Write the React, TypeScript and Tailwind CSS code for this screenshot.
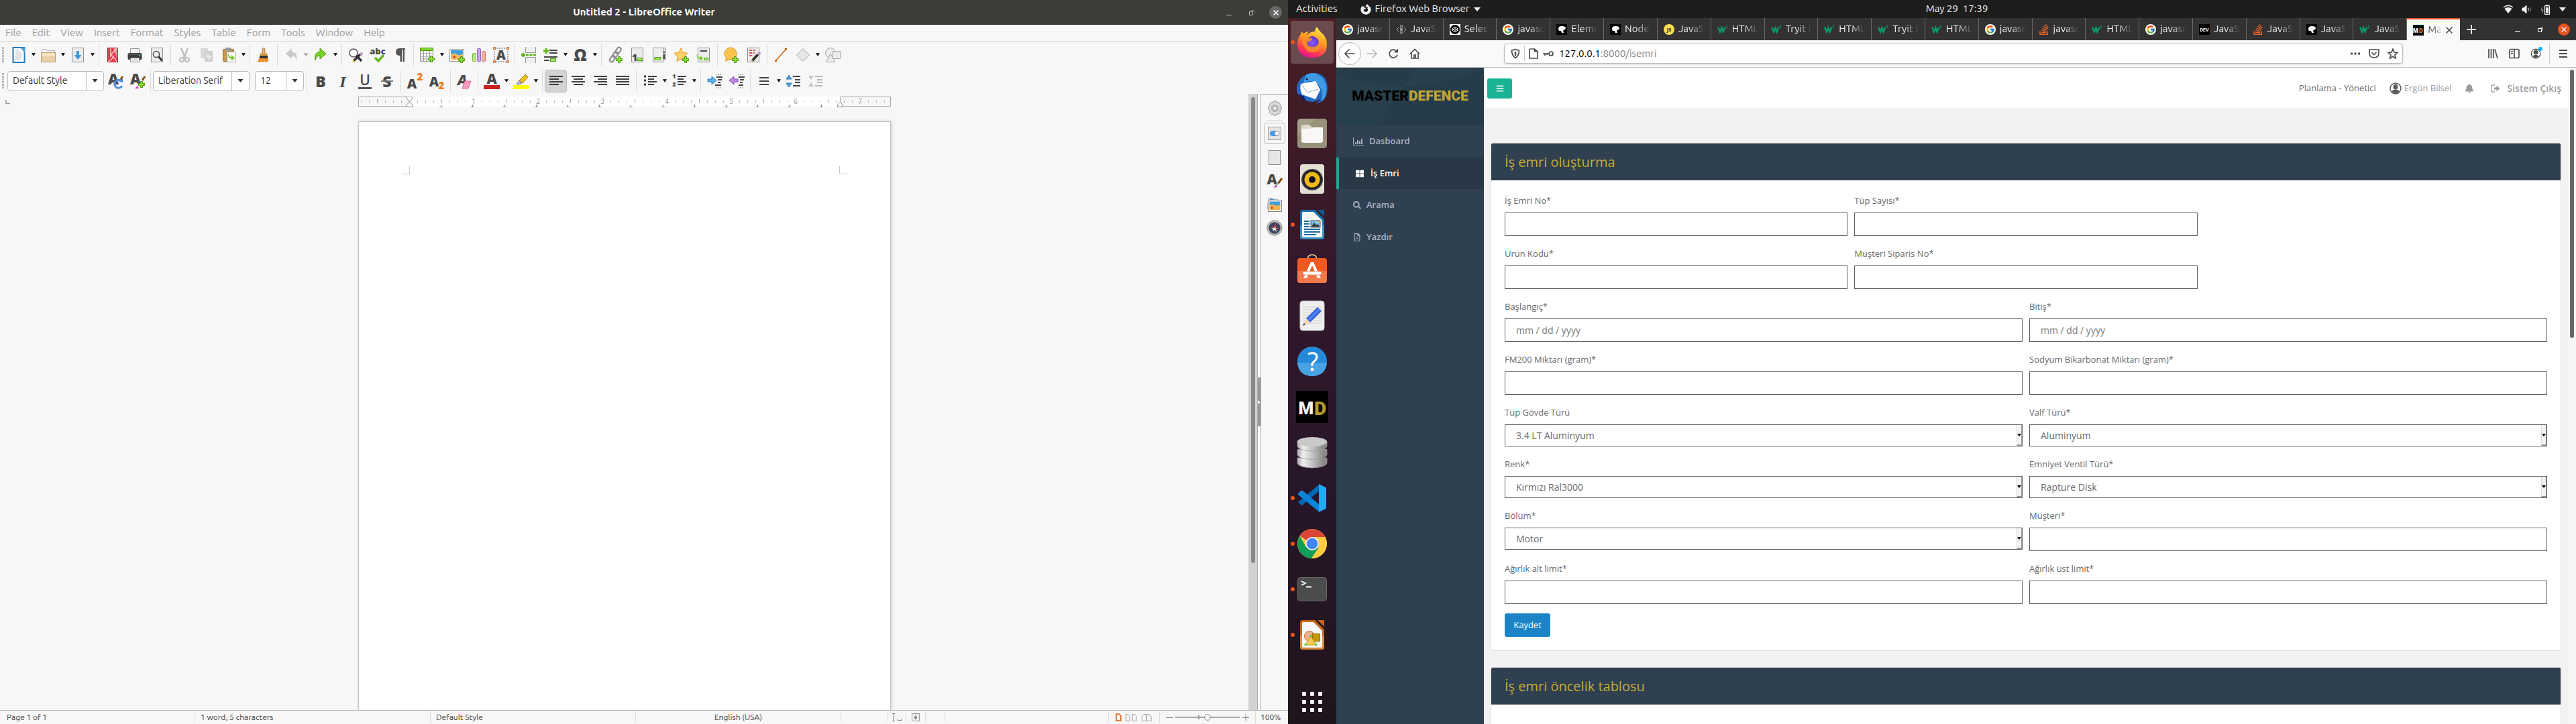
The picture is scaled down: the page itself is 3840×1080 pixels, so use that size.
import React, { useState } from "react";
import { FcGoogle } from "react-icons/fc";
import { SiCodepen, SiStackoverflow } from "react-icons/si";
import { FaFirefoxBrowser, FaThLarge, FaSearch, FaRegFilePdf, FaBell, FaBars } from "react-icons/fa";

const ui = "font-['Ubuntu','Noto_Sans',sans-serif]";

/* ---------- small shared pieces ---------- */

function Plus({ x, y }: { x: number; y: number }) {
  return (
    <path
      transform={`translate(${x} ${y})`}
      d="M3.5 .5h3v3h3v3h-3v3h-3v-3h-3v-3h3z"
      fill="#8ae234"
      stroke="#4e9a06"
    />
  );
}

function Lines({ x, widths, color = "#3f3f3f" }: { x: number[]; widths: number[]; color?: string }) {
  return (
    <g fill={color}>
      {widths.map((w, i) => (
        <rect key={i} x={x[i]} y={4 + i * 4} width={w} height="2" />
      ))}
    </g>
  );
}

function Glyph({ ch, x = 12, y = 20, size = 21, fill = "#484848", font = "Open Sans", italic = false, weight = 800 }: {
  ch: string; x?: number; y?: number; size?: number; fill?: string; font?: string; italic?: boolean; weight?: number;
}) {
  return (
    <text x={x} y={y} fontSize={size} fill={fill} fontFamily={`'${font}', sans-serif`} fontWeight={weight} fontStyle={italic ? "italic" : "normal"} textAnchor="middle">
      {ch}
    </text>
  );
}

const Sheet = () => <rect x="3.5" y="1.5" width="17" height="21" fill="#ececec" stroke="#8e8e8e" />;

const Brush = () => (
  <g>
    <path d="M23 8l-6 8" stroke="#8f4a06" strokeWidth="3" />
    <path d="M17 15l-3 4" stroke="#aaa" strokeWidth="2.5" />
    <path d="M14 18l-4 4 6-1z" fill="#c03cc0" />
  </g>
);

const icons: Record<string, React.ReactNode> = {
  new: (
    <g>
      <path d="M3.5 1h17v22h-17z" fill="#fff" stroke="#2a7ab8" strokeWidth="2" />
      <path d="M14 1h7v8z" fill="#4ba3dc" />
      <path d="M7 6h6M7 9h9M7 12h10M7 15h10M7 18h8" stroke="#b5b5b5" />
    </g>
  ),
  open: (
    <g>
      <path d="M2.5 9V3.5h7l1 2h11V9" fill="#fff" stroke="#b0b0b0" />
      <path d="M1.500 8.500h21v14h-21z" fill="#e9cfa5" stroke="#b89b6b" />
      <path d="M2 9.500h20v4H2z" fill="#f6e4c6" />
    </g>
  ),
  save: (
    <g>
      <Sheet />
      <path d="M12 6v8" stroke="#3a9ad9" strokeWidth="4" />
      <path d="M6.500 12h11L12 19z" fill="#3a9ad9" />
    </g>
  ),
  pdf: (
    <g>
      <rect x="4.500" y="1.500" width="15" height="21" fill="#d8434e" stroke="#a8202c" />
      <path d="M13 2h6v17z" fill="#ee8e94" />
      <path d="M9 2v13M18 2L9 12q6 3 9 10M5 22q6-2 8-8" stroke="#fbdcdc" strokeWidth="1.200" fill="none" />
    </g>
  ),
  print: (
    <g>
      <path d="M5.500 2.500h13V10h-13z" fill="#f2f2f2" stroke="#999" />
      <rect x="1.500" y="9" width="21" height="10" rx="2" fill="#3c3c3c" />
      <path d="M2 11h20" stroke="#777" />
      <rect x="18" y="12" width="2" height="2" fill="#3bc0e8" />
      <path d="M5.500 16.500h13v6h-13z" fill="#f4f4f4" stroke="#888" />
      <path d="M8 19.500h8" stroke="#999" />
    </g>
  ),
  preview: (
    <g>
      <Sheet />
      <circle cx="11" cy="11" r="4.500" fill="#f8f8f8" stroke="#444" strokeWidth="1.500" />
      <path d="M14.500 14.500l5 6" stroke="#333" strokeWidth="3" />
    </g>
  ),
  cut: (
    <g stroke="#bdbdbd" fill="none">
      <path d="M7 2l6 14M17 2l-6 14" strokeWidth="2.500" />
      <circle cx="8" cy="19" r="3" strokeWidth="2" />
      <circle cx="16" cy="19" r="3" strokeWidth="2" />
    </g>
  ),
  copy: (
    <g fill="#d9d9d9">
      <path d="M3 2h11v15H3z" />
      <path d="M9 6h12v16H9z" fill="#cfcfcf" />
      <path d="M12 10v4h4M14 12l4 3-4 3" fill="none" stroke="#eee" strokeWidth="2" />
    </g>
  ),
  paste: (
    <g>
      <rect x="3.500" y="3.500" width="16" height="18" rx="1" fill="#c89a52" stroke="#8c6424" />
      <rect x="7" y="1" width="9" height="5" rx="1" fill="#9a9a9a" />
      <path d="M9.500 7.500h12v15h-12z" fill="#fafafa" stroke="#999" />
      <path d="M12 10q0 5 4 5v-3l5 4.500-5 4v-3q-5 0-5-7z" fill="#73c924" />
    </g>
  ),
  brush: (
    <g>
      <path d="M12 1.500q2 0 2 3l-.5 5h-3l-.5-5q0-3 2-3z" fill="#e7b878" stroke="#b07830" />
      <path d="M7 9h10l1 4H6z" fill="#e0a050" />
      <path d="M6 13h12v5H6z" fill="#333" />
      <path d="M5 17h14v5q-9 1-18 0 4-1 4-5z" fill="#e88a28" />
      <path d="M9 18v4M13 18v4" stroke="#f7b765" />
    </g>
  ),
  undo: <path d="M4 10l9-8v5q9 1 7 13-1-7-7-7v5z" fill="#c9c9c9" />,
  redo: <path d="M20 10l-9-8v5q-9 1-7 13 1-7 7-7v5z" fill="#7bd12e" stroke="#4e9a06" />,
  find: (
    <g>
      <circle cx="9" cy="9" r="6" fill="#fff" stroke="#555" strokeWidth="1.500" />
      <path d="M13 13l8 8" stroke="#333" strokeWidth="3.500" />
      <path d="M9 21L19 11" stroke="#333" strokeWidth="3.500" />
      <path d="M19 12l3-3" stroke="#c48bc8" strokeWidth="4" />
      <path d="M7 23l1-4 3 3z" fill="#e8d060" />
    </g>
  ),
  abc: (
    <g>
      <Glyph ch="abc" size={13} y={11} />
      <path d="M8 16l5 5 8-9" fill="none" stroke="#62b81c" strokeWidth="3.500" />
    </g>
  ),
  pilcrow: (
    <g fill="#555">
      <path d="M12 2h8v2h-1v18h-2.500V4H15v18h-2.500v-9Q6 13 6 7.500T12 2z" />
    </g>
  ),
  table: (
    <g>
      <rect x="1.500" y="1.500" width="19" height="20" fill="#fff" stroke="#999" />
      <path d="M1.500 1.500h19v4h-19z" fill="#84d43a" stroke="#4e9a06" />
      <path d="M2 10h18M2 14h18M2 18h18M6.500 6v15M11 6v15M15.500 6v15" stroke="#999" />
      <Plus x={13} y={13} />
    </g>
  ),
  image: (
    <g>
      <rect x="1.500" y="3.500" width="21" height="18" fill="#fff" stroke="#999" />
      <path d="M3 5h18v8H3z" fill="#3c9de0" />
      <path d="M3 11q5-3 9 0t9-1v9H3z" fill="#f0b860" />
      <path d="M8 13l1 4M6 15h4" stroke="#d84020" strokeWidth="1.500" />
      <Plus x={14} y={14} />
    </g>
  ),
  chart: (
    <g>
      <rect x="2.500" y="9.500" width="5" height="12" rx="1" fill="#b6ea85" stroke="#73b83a" />
      <rect x="9.500" y="2.500" width="5" height="19" rx="1" fill="#cfa6ee" stroke="#9360c4" />
      <rect x="16.500" y="6.500" width="5" height="15" rx="1" fill="#f3b2a0" stroke="#d27660" />
    </g>
  ),
  textbox: (
    <g>
      <rect x="2" y="2" width="20" height="20" fill="none" stroke="#555" strokeDasharray="2 1.500" />
      <Glyph ch="A" size={19} y={19} />
      <path d="M.5.5h3v3h-3zM20.500.5h3v3h-3zM.5 20.500h3v3h-3zM20.500 20.500h3v3h-3z" fill="#f5b48e" stroke="#d2703a" />
    </g>
  ),
  pagebreak: (
    <g>
      <path d="M7.500 0v8.500h15V0M7.500 24v-8.500h15V24" fill="#f0f0f0" stroke="#999" />
      <path d="M8 12h16" stroke="#62b81c" strokeWidth="3" strokeDasharray="4 1.500" />
      <path d="M1 12h6M4 9v6" stroke="#62b81c" strokeWidth="3" />
    </g>
  ),
  fields: (
    <g>
      <path d="M10 5h12M10 9h12M2 15h20M2 20h8" stroke="#444" strokeWidth="2" />
      <path d="M5 2v8M1 6h8" stroke="#62b81c" strokeWidth="3" />
      <rect x="11.500" y="17.500" width="8" height="4" fill="#a6e86a" stroke="#4e9a06" />
    </g>
  ),
  omega: <Glyph ch="Ω" size={24} y={21} />,
  link: (
    <g fill="none">
      <g transform="rotate(35 12 12)" stroke="#8a8a8a" strokeWidth="2">
        <rect x="9" y="-1" width="6" height="10" rx="3" />
        <rect x="9" y="7" width="6" height="9" rx="3" />
        <rect x="9" y="14" width="6" height="10" rx="3" />
      </g>
      <Plus x={13} y={14} />
    </g>
  ),
  footnote: (
    <g>
      <Sheet />
      <Glyph ch="1" x={8} y={21} size={14} />
      <rect x="12" y="16.500" width="7" height="4" fill="#a6e86a" stroke="#4e9a06" />
    </g>
  ),
  endnote: (
    <g>
      <path d="M6.500 1.500h15v18h-15z" fill="#e4e4e4" stroke="#999" />
      <path d="M2.500 1.500h15v21h-15z" fill="#efefef" stroke="#8e8e8e" />
      <rect x="5" y="15.500" width="9" height="4" fill="#a6e86a" stroke="#4e9a06" />
      <path d="M19 11v7M19 7v2" stroke="#444" strokeWidth="2" />
    </g>
  ),
  star: (
    <g>
      <path d="M11 1.500l3 7 7 .8-5 5 1.300 7.200L11 18l-6 3.500 1-7.200-5-5 7-.8z" fill="#fcd068" stroke="#e09a2c" />
      <Plus x={13} y={14} />
    </g>
  ),
  crossref: (
    <g>
      <Sheet />
      <path d="M7 6h10" stroke="#444" strokeWidth="2" />
      <path d="M2 10q0 6 5 6v-3l4 4-4 4v-3q-7-1-5-8z" fill="#73c924" />
      <rect x="13.500" y="16.500" width="5" height="3" fill="#a6e86a" stroke="#4e9a06" />
    </g>
  ),
  comment: (
    <g>
      <circle cx="11" cy="10" r="9" fill="#fcc24e" stroke="#dc9420" />
      <path d="M4 15l-1 7 7-3z" fill="#f0b040" />
      <Plus x={13} y={14} />
    </g>
  ),
  track: (
    <g>
      <Sheet />
      <path d="M6 5h9M6 9h8M6 13h6" stroke="#d03434" strokeWidth="1.500" strokeDasharray="4 1" />
      <path d="M10 21l9-10" stroke="#333" strokeWidth="4" />
      <path d="M19 12l3-4" stroke="#c48bc8" strokeWidth="4" />
      <path d="M8 23l1-4 3 2z" fill="#e8d060" />
    </g>
  ),
  line: (
    <g>
      <path d="M4 21L19 4" stroke="#d2600a" strokeWidth="1.500" />
      <path d="M3 19h3v3H3zM18 2h3v3h-3z" fill="#d2600a" />
    </g>
  ),
  diamond: <path d="M12 2.500L21.500 12 12 21.500 2.500 12z" fill="#e6e6e6" stroke="#a6a6a6" />,
  shapes: (
    <g fill="#ececec" stroke="#a6a6a6">
      <circle cx="9" cy="9" r="7.500" />
      <rect x="12.500" y="6.500" width="11" height="11" />
      <path d="M9 10.500l7 12H2z" />
    </g>
  ),
  styleUpdate: (
    <g>
      <Glyph ch="A" x={9} y={17} size={22} />
      <path d="M23 5l-4 6" stroke="#8f4a06" strokeWidth="3" />
      <path d="M21 12a6 6 0 1 0 1 7" fill="none" stroke="#4f8fdc" strokeWidth="3" />
      <path d="M17 13l6 1 0-6z" fill="#4f8fdc" />
    </g>
  ),
  styleNew: (
    <g>
      <Glyph ch="A" x={9} y={17} size={22} />
      <path d="M23 5l-4 6" stroke="#8f4a06" strokeWidth="3" />
      <path d="M8 23l4-4 2 4z" fill="#d03cc0" />
      <Plus x={13} y={12} />
    </g>
  ),
  bold: <Glyph ch="B" size={23} y={21} font="Open Sans" />,
  italic: <Glyph ch="I" size={24} y={21} font="Liberation Serif" italic weight={700} />,
  underline: (
    <g>
      <Glyph ch="U" size={21} y={18} font="Open Sans" weight={600} />
      <rect x="2" y="21" width="20" height="3" fill="#555" />
    </g>
  ),
  strike: (
    <g>
      <Glyph ch="S" size={23} y={21} />
      <rect x="3" y="11" width="18" height="2" fill="#777" />
    </g>
  ),
  sup: (
    <g>
      <Glyph ch="A" x={8} y={23} size={20} />
      <Glyph ch="2" x={20} y={11} size={15} fill="#ee7a1c" />
    </g>
  ),
  sub: (
    <g>
      <Glyph ch="A" x={8} y={20} size={20} />
      <Glyph ch="2" x={19} y={24} size={15} fill="#ee7a1c" />
    </g>
  ),
  clear: (
    <g>
      <Glyph ch="A" x={9} y={18} size={21} italic />
      <path d="M13 12h9l-4 11h-9z" fill="#f79ac0" stroke="#e0669a" />
    </g>
  ),
  fontcolor: (
    <g>
      <Glyph ch="A" y={16} size={21} />
      <rect x="0" y="18" width="24" height="6" fill="#c9211e" />
    </g>
  ),
  highlight: (
    <g>
      <path d="M18 2l4 4-8 9-5-4z" fill="#f0c020" stroke="#a88414" />
      <path d="M9 11l4 4-6 2-2-1z" fill="#bbb" stroke="#777" />
      <rect x="0" y="18" width="24" height="6" fill="#ffff00" />
    </g>
  ),
  left: <Lines x={[2, 2, 2, 2]} widths={[20, 14, 20, 14]} />,
  center: <Lines x={[2, 5, 2, 5]} widths={[20, 14, 20, 14]} />,
  right: <Lines x={[2, 8, 2, 8]} widths={[20, 14, 20, 14]} />,
  justify: <Lines x={[2, 2, 2, 2]} widths={[20, 20, 20, 20]} />,
  bullets: (
    <g>
      <Lines x={[9, 9, 9, 9]} widths={[13, 9, 13, 9]} />
      <path d="M3 5h3M3 11h3M3 17h3" stroke="#3f3f3f" strokeWidth="3" />
    </g>
  ),
  numbers: (
    <g>
      <Lines x={[9, 9, 9, 9]} widths={[13, 9, 13, 9]} />
      <Glyph ch="1" x={4} y={8} size={9} />
      <Glyph ch="2" x={4} y={20} size={9} />
    </g>
  ),
  indent: (
    <g>
      <path d="M2 9h6V5l7 6-7 6v-4H2z" fill="#5db2e8" stroke="#2c78b4" />
      <path d="M15 6h9M17 10h6M17 14h4M13 18h9" stroke="#444" strokeWidth="2" />
      <path d="M14 2h8M14 22h8" stroke="#888" strokeDasharray="2 1" />
    </g>
  ),
  outdent: (
    <g>
      <path d="M14 9H8V5l-7 6 7 6v-4h6z" fill="#c08ae8" stroke="#8048b4" />
      <path d="M15 6h9M17 10h6M17 14h4M15 18h7" stroke="#444" strokeWidth="2" />
      <path d="M14 2h8M14 22h8" stroke="#888" strokeDasharray="2 1" />
    </g>
  ),
  spacing: <path d="M5 7h14M5 12h14M5 17h14" stroke="#444" strokeWidth="2" />,
  paraUp: (
    <g>
      <path d="M1 9l4-6 4 6zM1 15l4 6 4-6z" fill="#4ea6e0" stroke="#2c78b4" />
      <path d="M11 5h11M14 10h8M14 14h8M11 19h11" stroke="#444" strokeWidth="2" />
    </g>
  ),
  paraDown: (
    <g>
      <path d="M1 4h8l-4 6zM1 20h8l-4-6z" fill="#c4c4c4" />
      <path d="M11 5h11M14 10h8M14 14h8M11 19h11" stroke="#b8b8b8" strokeWidth="2" />
    </g>
  ),
};

function Caret({ pale = false }: { pale?: boolean }) {
  return (
    <svg viewBox="0 0 8 6" className={pale ? "h-[5px] w-[6px] text-gray-400" : "h-[5px] w-[6px] text-black"} aria-hidden="true">
      <path d="M0 0h8L4 6z" fill="currentColor" />
    </svg>
  );
}

/* "|" is a divider, "v" a drop-down arrow, "w" a disabled arrow */
function Tools({ items }: { items: string[] }) {
  return (
    <>
      {items.map((n, i) => {
        if (n === "|") return <span key={i} className="ml-1 mr-[3px] h-8 w-px shrink-0 bg-[#dadada]" />;
        if (n === "v" || n === "w")
          return (
            <button key={i} aria-label={`${items[i - 1]} options`} className="flex h-8 w-[11px] shrink-0 items-center justify-center">
              <Caret pale={n === "w"} />
            </button>
          );
        return (
          <button
            key={i}
            aria-label={n}
            className={
              n === "left"
                ? "flex h-[34px] w-[33px] shrink-0 items-center justify-center rounded border border-[#bdbdbd] bg-[#d3d3d3]"
                : "flex h-[34px] w-[33px] shrink-0 items-center justify-center"
            }
          >
            <svg viewBox="0 0 24 24" className="size-6 overflow-visible">{icons[n]}</svg>
          </button>
        );
      })}
    </>
  );
}

const Grip = () => <span className="ml-[3px] mr-[5px] h-6 w-[3px] shrink-0 bg-[repeating-linear-gradient(#bbb_0_3px,transparent_3px_4px)]" />;

function Combo({ label, value, narrow = false }: { label: string; value: string; narrow?: boolean }) {
  return (
    <div className={narrow ? "flex h-[30px] w-[73px] shrink-0 rounded border border-[#bdbdbd] bg-white" : "flex h-[30px] w-36 shrink-0 rounded border border-[#bdbdbd] bg-white"}>
      <input aria-label={label} defaultValue={value} className="mr-1 min-w-0 flex-1 bg-transparent pl-[7px] text-[14px] text-[#333] outline-none" />
      <button aria-label={`${label} list`} className="flex w-[26px] items-center justify-center border-l border-[#bdbdbd] text-[#333]">
        <svg viewBox="0 0 8 5" className="h-[5px] w-[9px]"><path d="M0 0h8L4 5z" fill="currentColor" /></svg>
      </button>
    </div>
  );
}

/* ---------- Writer ---------- */

function Ruler() {
  const ticks: React.ReactNode[] = [];
  for (let i = -6; i <= 59; i++) {
    const x = 76 + i * 12;
    if (i % 8 === 0) continue;
    const half = i % 4 === 0;
    ticks.push(<path key={i} d={half ? `M${x}.5 4v6` : `M${x}.5 6v3`} stroke="#a8a8a8" />);
  }
  return (
    <svg viewBox="0 0 794 16" className="h-4 w-[794px] shrink-0" aria-hidden="true">
      <rect x="76" y="0" width="643" height="15" fill="#fff" />
      <path d="M76.500.5H.5v14h76M718.500 15V.5h75v14h-75" fill="none" stroke="#a8a8a8" />
      {ticks}
      {[1, 2, 3, 4, 5, 6, 7].map((n) => (
        <text key={n} x={76 + n * 96} y="11" fontSize="10" textAnchor="middle" fill="#9a9a9a" fontFamily="'Noto Sans', sans-serif">{n}</text>
      ))}
      {Array.from({ length: 13 }, (_, i) => Math.round(76 + (i + 1) * 47.2)).map((x) => (
        <path key={x} d={`M${x - 2} 15.500h5M${x + 0.5} 12v4`} stroke="#888" />
      ))}
      <path d="M72.500 0h8v3l-4 5 4 4v3.500h-8V12l4-4-4-5zM714.500 15.500v-3l4-4 4 4v3z" fill="#fff" stroke="#888" />
    </svg>
  );
}

const sideIcons: { name: string; art: React.ReactNode }[] = [
  {
    name: "Page deck",
    art: <rect x="3.500" y="1.500" width="17" height="21" fill="#e6e6e6" stroke="#8e8e8e" />,
  },
  { name: "Styles deck", art: <g><Glyph ch="A" x={8} y={17} size={21} /><Brush /></g> },
  {
    name: "Gallery",
    art: (
      <g>
        <path d="M3 2l18 4-2 16-18-3z" fill="#f4f4f4" stroke="#aaa" />
        <path d="M5 3l12 3v2H4z" fill="#3c8ad0" />
        <rect x="2.500" y="5.500" width="20" height="17" fill="#fff" stroke="#888" />
        <path d="M4.500 7.500h16v7h-16z" fill="#3c9de0" />
        <path d="M4.500 13q4-2 8 0t8-1v8.500h-16z" fill="#f0b450" />
        <path d="M8 15v4M6 17h4" stroke="#d84020" strokeWidth="1.500" />
      </g>
    ),
  },
  {
    name: "Navigator",
    art: (
      <g>
        <circle cx="12" cy="12" r="10" fill="#3b4660" stroke="#c0c0c0" strokeWidth="2.500" />
        <circle cx="12" cy="12" r="11.300" fill="none" stroke="#777" strokeWidth=".7" />
        <path d="M12 9l2 3 3 1-3 1 1 4-3-3-3 2 1-3-3-1 3-1z" fill="#f4f4f4" />
        <path d="M14 4l-1 7-6-1 5 2zM13 12l6 1-6 0z" fill="#e04040" stroke="#e04040" strokeWidth=".6" />
      </g>
    ),
  },
];

function Writer() {
  return (
    <section className={`flex w-1/2 min-w-0 flex-col bg-[#f7f7f7] text-[13px] text-[#3d3d3d] ${ui}`}>
      <header className="grid h-[37px] shrink-0 grid-cols-[1fr_auto_1fr] items-center bg-[#3e3c39] text-white">
        <h1 className="col-start-2 text-[15px] font-bold">Untitled 2 - LibreOffice Writer</h1>
        <div className="flex items-center justify-end gap-[18px] pr-[9px] text-[#bbb]">
          <button aria-label="Minimize"><svg className="size-4" viewBox="0 0 16 16"><path d="M4 11.500h8" stroke="currentColor" /></svg></button>
          <button aria-label="Restore"><svg className="size-4" viewBox="0 0 16 16" fill="none" stroke="currentColor"><rect x="4.500" y="6.500" width="5" height="5" /><path d="M7 4.500h4.500V10" opacity=".5" /></svg></button>
          <button aria-label="Close" className="flex size-[19px] items-center justify-center rounded-full bg-[#686765] text-white">
            <svg className="size-2.5" viewBox="0 0 10 10"><path d="M1.500 1.500l7 7M8.500 1.500l-7 7" stroke="currentColor" strokeWidth="1.500" /></svg>
          </button>
        </div>
      </header>
      <nav className="flex h-[25px] shrink-0 items-center gap-4 border-b border-[#d8d8d8] pl-2 text-[15px] text-[#999]">
        {["File", "Edit", "View", "Insert", "Format", "Styles", "Table", "Form", "Tools", "Window", "Help"].map((m) => (
          <button key={m}>{m}</button>
        ))}
      </nav>
      <div className="flex h-[39px] shrink-0 items-center" role="toolbar" aria-label="Standard">
        <Grip />
        <Tools
          items={["new", "v", "open", "v", "save", "v", "|", "pdf", "print", "preview", "|", "cut", "copy", "paste", "v", "|", "brush", "|", "undo", "w", "redo", "v", "|", "find", "abc", "pilcrow", "|", "table", "v", "image", "chart", "textbox", "|", "pagebreak", "fields", "v", "omega", "v", "|", "link", "footnote", "endnote", "star", "crossref", "|", "comment", "track", "|", "line", "diamond", "v", "shapes"]}
        />
      </div>
      <div className="flex h-[39px] shrink-0 items-center" role="toolbar" aria-label="Formatting">
        <Grip />
        <Combo label="Paragraph style" value="Default Style" />
        <Tools items={["styleUpdate", "styleNew"]} />
        <span className="mx-[3px] h-8 w-px shrink-0 bg-[#dadada]" />
        <Combo label="Font name" value="Liberation Serif" />
        <span className="w-2" />
        <Combo label="Font size" value="12" narrow />
        <Tools
          items={["|", "bold", "italic", "underline", "strike", "|", "sup", "sub", "|", "clear", "|", "fontcolor", "v", "highlight", "v", "|", "left", "center", "right", "justify", "|", "bullets", "v", "numbers", "v", "|", "indent", "outdent", "|", "spacing", "v", "paraUp", "paraDown"]}
        />
      </div>
      <div className="flex min-h-0 flex-1">
        <div className="relative flex min-w-0 flex-1 flex-col items-center overflow-hidden pt-1">
          <svg className="absolute left-2 top-2 size-2" viewBox="0 0 8 8"><path d="M1 1v5.500h6" fill="none" stroke="#999" strokeWidth="1.500" /></svg>
          <Ruler />
          <div role="textbox" aria-label="Document" className="mt-[21px] flex w-[794px] flex-1 justify-between border border-b-0 border-[#c4c4c4] bg-white px-16 pt-[66px] shadow-[1px_0_5px_#0003]">
            <svg className="size-3" viewBox="0 0 12 12"><path d="M11.500 0v11.500H0" fill="none" stroke="#c8c8c8" /></svg>
            <svg className="size-3" viewBox="0 0 12 12"><path d="M.5 0v11.500H12" fill="none" stroke="#c8c8c8" /></svg>
          </div>
        </div>
        <div className="flex w-[13px] flex-col items-center bg-[#d2d2d2] pt-[5px]">
          <span className="h-[76%] w-[6px] rounded-full bg-[#888]" />
        </div>
        <div className="flex w-[6px] flex-col justify-center border-x border-[#a8a8a8] bg-white">
          <button aria-label="Hide sidebar" className="flex h-[73px] items-center justify-center bg-[#999] text-white">
            <svg viewBox="0 0 4 6" className="h-2 w-1"><path d="M0 0l4 3-4 3z" fill="currentColor" /></svg>
          </button>
        </div>
        <aside className="flex w-10 flex-col items-center border-t border-[#aaa] pt-2">
          <button aria-label="Sidebar settings" className="flex size-6 items-center justify-center">
            <svg viewBox="0 0 24 24" className="size-[23px]">
              <path d="M10 1h4l1 2.500 2.500-1 3 3-1 2.500 2.500 1.500v5L19.500 16l1 2.500-3 3-2.500-1L14 23h-4l-1-2.500-2.500 1-3-3 1-2.500L2 14.500v-5L4.500 8l-1-2.500 3-3 2.500 1z" fill="#dcdcdc" stroke="#909090" />
              <circle cx="12" cy="12" r="5.500" fill="#c4c4c4" stroke="#aaa" />
              <circle cx="12" cy="12" r="3" fill="#f7f7f7" stroke="#888" />
            </svg>
          </button>
          <span className="mt-1.5 h-px w-6 bg-[#ddd]" />
          <button aria-label="Properties" className="mt-[3px] flex h-8 w-8 items-center justify-center rounded border border-[#bbb]">
            <svg viewBox="0 0 24 24" className="size-6">
              <rect x="2.500" y="2.500" width="19" height="19" fill="#e6e6e6" stroke="#999" />
              <rect x="5" y="8" width="14" height="8" rx="4" fill="#4a98ec" />
              <circle cx="15.500" cy="12" r="3.500" fill="#fff" stroke="#888" />
            </svg>
          </button>
          <div className="mt-2 flex flex-col gap-[11px]">
            {sideIcons.map((s) => (
              <button key={s.name} aria-label={s.name}><svg viewBox="0 0 24 24" className="size-6 overflow-visible">{s.art}</svg></button>
            ))}
          </div>
        </aside>
      </div>
      <footer className="flex h-[21px] shrink-0 items-center border-t border-[#aaa] text-[12px]">
        <span className="w-[290px] pl-2.5">Page 1 of 1</span>
        <span className="w-[351px] border-l border-[#ddd] pl-2">1 word, 5 characters</span>
        <span className="w-[306px] border-l border-[#ddd] pl-2">Default Style</span>
        <span className="w-[306px] border-l border-[#ddd] text-center">English (USA)</span>
        <span className="h-3.5 w-[69px] border-l border-[#ddd]" />
        <span className="flex h-3.5 w-7 items-center justify-center border-l border-[#ddd]">
          <svg viewBox="0 0 16 12" className="h-3 w-4" fill="none" stroke="#888"><path d="M1 .5h4M3 .5v11M1 11.500h4M9 8v2.500h6V8" /></svg>
        </span>
        <span className="flex h-3.5 w-[29px] items-center justify-center border-l border-[#ddd]">
          <svg viewBox="0 0 12 12" className="size-3"><rect x=".5" y=".5" width="11" height="11" fill="#eee" stroke="#999" /><path d="M6 2v4M4 5.500h4L6 9z" fill="#777" stroke="#777" /></svg>
        </span>
        <span className="h-3.5 w-[29px] border-l border-[#ddd]" />
        <span className="h-3.5 flex-1 border-l border-[#ddd]" />
        <span className="flex h-3.5 w-[76px] items-center justify-between border-l border-[#ddd] px-2.5">
          <svg viewBox="0 0 56 12" className="h-3 w-14" fill="none" stroke="#999">
            <path d="M1 1h4l3 3v7H1z" stroke="#d2600a" strokeWidth="1.500" />
            <path d="M15.500 1.500h3l3 3v7h-6zM25.500 1.500h3l3 3v7h-6zM47 11.500h-7v-7l3-3h4zM47 1.500h4l3 3v7h-7z" />
          </svg>
        </span>
        <span className="flex h-3.5 w-[143px] items-center justify-between border-l border-[#ddd] px-[9px] text-[#888]">
          <button aria-label="Zoom out"><svg viewBox="0 0 10 10" className="size-2.5"><path d="M0 5.500h10" stroke="currentColor" /></svg></button>
          <label className="relative flex w-24 items-center">
            <span className="h-0.5 w-full bg-[#a8a8a8]" />
            <span className="absolute left-[34px] h-1.5 w-0.5 bg-[#999]" />
            <span className="absolute left-[43px] size-2.5 rounded-full border border-[#999] bg-[#f4f4f4]" />
            <input type="range" aria-label="Zoom" defaultValue="50" className="absolute inset-0 w-full opacity-0" />
          </label>
          <button aria-label="Zoom in"><svg viewBox="0 0 10 10" className="size-2.5"><path d="M0 5.500h10M5 .5v10" stroke="currentColor" /></svg></button>
        </span>
        <span className="w-[49px] border-l border-[#ddd] pl-[7px]">100%</span>
      </footer>
    </section>
  );
}

/* ---------- Dock ---------- */

const dock: { name: string; running?: boolean; active?: boolean; art: React.ReactNode }[] = [
  {
    name: "Firefox", running: true, active: true,
    art: (
      <g>
        <defs>
          <linearGradient id="ff" x1=".8" y1="0" x2=".4" y2="1"><stop offset="0" stopColor="#fff44f" /><stop offset=".45" stopColor="#ff9a20" /><stop offset=".8" stopColor="#ff3a50" /><stop offset="1" stopColor="#e01490" /></linearGradient>
          <radialGradient id="fp"><stop offset="0" stopColor="#9059ff" /><stop offset="1" stopColor="#5b38c0" /></radialGradient>
        </defs>
        <path d="M31 1q3 5 6 8 9 7 9 18 0 20-22 20T2 27q0-9 5-15l1-4 3 3q4-3 8-3-3 3-3 6 5-7 13-6-2-3 2-7z" fill="url(#ff)" />
        <circle cx="24" cy="25" r="10" fill="url(#fp)" />
        <path d="M9 19q8-6 15 0-1 4-7 4-1 8 8 8 8-1 9-8 5 15-9 16Q11 38 9 19z" fill="#ff9320" opacity=".85" />
      </g>
    ),
  },
  {
    name: "Thunderbird",
    art: (
      <g>
        <path d="M24 2Q46 1 47 24q0 20-18 24 6-4 7-8-9 8-21 3Q0 38 1 23 5 4 24 2z" fill="#2468c0" />
        <path d="M16 4q14-6 24 6 8 10 4 26-2 6-6 8 3-14-3-22Q28 12 18 14l-8 6Q12 10 16 4z" fill="#3f9be4" />
        <path d="M7 18l22-4 7 13-7 14-20-7q-4-8-2-16z" fill="#fff" />
        <path d="M8 19l9 12 16-5" fill="none" stroke="#8aa" strokeWidth="1" />
        <path d="M3 33l9 4 2 6q-8-4-11-10z" fill="#1b1460" />
        <circle cx="16" cy="11" r="1.500" fill="#113" />
      </g>
    ),
  },
  {
    name: "Files",
    art: (
      <g>
        <rect x="2" y="2" width="44" height="44" rx="5" fill="#a59e89" />
        <path d="M2 28L30 2h11q5 0 5 5v34q0 5-5 5H7q-5 0-5-5z" fill="#989179" />
        <path d="M8 14q0-3 3-3h9l4 4v5H8z" fill="#ddd9cc" />
        <path d="M8 17h13l4-2h15v20q0 3-3 3H11q-3 0-3-3z" fill="#f8f7f5" />
      </g>
    ),
  },
  {
    name: "Rhythmbox",
    art: (
      <g>
        <rect x="6" y="2" width="36" height="44" rx="4" fill="#e4dfd3" />
        <circle cx="24" cy="25" r="16" fill="#3b3b40" />
        <circle cx="24" cy="25" r="14" fill="#1d1d22" />
        <circle cx="24" cy="25" r="11.500" fill="#f0b91c" />
        <circle cx="24" cy="25" r="5" fill="#151515" />
      </g>
    ),
  },
  {
    name: "LibreOffice Writer", running: true,
    art: (
      <g>
        <path d="M10 2h18l14 14v26q0 4-4 4H10q-4 0-4-4V6q0-4 4-4z" fill="#1a6ea6" />
        <path d="M6 25h36v17q0 4-4 4H10q-4 0-4-4z" fill="#3b95c4" />
        <path d="M10 5h16l13 13v23q0 2-2 2H11q-2 0-2-2V6z" fill="#f6f6f6" />
        <path d="M32 2h10v10z" fill="#0f5a90" />
        <path d="M12 19h8M12 23h8M12 27h8M12 31h24M12 35h24M12 39h18" stroke="#1a6ea6" strokeWidth="2" />
        <rect x="22" y="18" width="14" height="10" fill="#7fc0ee" stroke="#333" strokeWidth=".8" />
        <path d="M23 27l4-6 3 4 2-2 3 4z" fill="#333" /><circle cx="34" cy="20" r="1.500" fill="#f4c430" />
      </g>
    ),
  },
  {
    name: "Software",
    art: (
      <g>
        <path d="M17 9q0-8 7-8t7 8" fill="none" stroke="#f6dcae" strokeWidth="1.500" />
        <rect x="2" y="6" width="44" height="37" rx="4" fill="#f05a22" />
        <path d="M2 25h44v14q0 4-4 4H6q-4 0-4-4z" fill="#f27a4a" />
        <path d="M22 12h4l11 24h-5l-8-19-8 19h-5z" fill="#fff" />
        <rect x="10" y="26" width="28" height="5" rx="2.500" fill="#fff" stroke="#e8673a" strokeWidth=".6" />
      </g>
    ),
  },
  {
    name: "Text Editor",
    art: (
      <g>
        <rect x="6" y="2" width="36" height="44" rx="4" fill="#efefef" stroke="#c8c8c8" />
        <path d="M10 11h28M10 15h28M10 19h28M10 23h28M10 27h28M10 31h28M10 35h28" stroke="#cfcfcf" />
        <path d="M32 11l6 6-17 17-6-6z" fill="#3565dc" />
        <path d="M34 13l2 2-17 17-2-2z" fill="#5486f4" />
        <path d="M15 28l6 6-11 5z" fill="#f5d6b0" /><path d="M12 35l2 2-4 2z" fill="#333" />
      </g>
    ),
  },
  {
    name: "Help",
    art: (
      <g>
        <circle cx="24" cy="24" r="22" fill="#2489d8" />
        <path d="M2 26h44q-2 20-22 20T2 26z" fill="#48a2e4" />
        <path d="M18 13q12-4 13 4 0 4-4 7-4 3-3 7" fill="none" stroke="#fff" strokeWidth="3" />
        <circle cx="24" cy="36" r="2.500" fill="#fff" />
      </g>
    ),
  },
  {
    name: "Master Defence",
    art: (
      <g>
        <rect width="48" height="48" fill="#000" />
        <g fontFamily="'Roboto', sans-serif" fontWeight="900" textAnchor="middle">
          <text x="15" y="35" fill="#f4f4f4" fontSize="26">M</text>
          <text x="36" y="36" fill="#b99a2c" fontSize="28">D</text>
        </g>
      </g>
    ),
  },
  {
    name: "Database",
    art: (
      <g>
        <defs><linearGradient id="db"><stop offset="0" stopColor="#aaa" /><stop offset=".2" stopColor="#f0f0f0" /><stop offset=".9" stopColor="#888" /></linearGradient></defs>
        {[0, 1, 2].map((i) => (
          <path key={i} d="M2 32v8q2 6 22 7 20-1 22-7v-8z" transform={`translate(0 ${-i * 12.500})`} fill="url(#db)" stroke="#999" strokeWidth=".8" />
        ))}
        <ellipse cx="24" cy="8" rx="22" ry="7" fill="#c9c9c9" />
      </g>
    ),
  },
  {
    name: "Visual Studio Code", running: true,
    art: (
      <g>
        <path d="M3 30l4 4q2 1 3 0L35 13V3z" fill="#0067b3" />
        <path d="M3 17l4-4q2-1 3 0l25 21v11L3 19z" fill="#0a84d8" />
        <path d="M34 3l10 5q1 1 1 2v28q0 1-1 2l-10 5z" fill="#25a7f4" />
      </g>
    ),
  },
  {
    name: "Chrome", running: true,
    art: (
      <g>
        <circle cx="24" cy="24" r="22" fill="#fc4" />
        <path d="M24 24L5.500 12.500A22 22 0 0 1 43.500 14H24z" fill="#db4437" />
        <path d="M24 24l10 6L23 46A22 22 0 0 1 5.500 12.500L15 29z" fill="#0f9d58" />
        <path d="M34 29L23 46A22 22 0 0 0 43.500 14H26z" fill="#fc4" />
        <circle cx="24" cy="24" r="10" fill="#f1f1f1" /><circle cx="24" cy="24" r="8.300" fill="#4285f4" />
      </g>
    ),
  },
  {
    name: "Terminal", running: true,
    art: (
      <g>
        <rect x="2.500" y="6.500" width="43" height="35" rx="4" fill="#4c4c4c" stroke="#6a6a6a" />
        <path d="M8 12l6 3-6 3M15 20.500h8" fill="none" stroke="#fff" strokeWidth="1.800" />
      </g>
    ),
  },
  {
    name: "LibreOffice Draw", running: true,
    art: (
      <g>
        <path d="M10 2h18l14 14v26q0 4-4 4H10q-4 0-4-4V6q0-4 4-4z" fill="#c4651c" />
        <path d="M6 25h36v17q0 4-4 4H10q-4 0-4-4z" fill="#dc8a40" />
        <path d="M10 5h16l13 13v23q0 2-2 2H11q-2 0-2-2V6z" fill="#f6f6f6" />
        <path d="M32 2h10v10z" fill="#c4651c" />
        <circle cx="20" cy="26" r="7.500" fill="#f4b08c" stroke="#c86a3c" />
        <rect x="24.500" y="22.500" width="11" height="11" fill="#c49a00" stroke="#8a6c00" />
        <path d="M22 26l8 13H14z" fill="#f4cc5c" stroke="#c49a00" />
        <path d="M20.500 24h3v3h-3zM12.500 37h3v3h-3zM28.500 37h3v3h-3z" fill="#4c4" />
      </g>
    ),
  },
];

function Dock() {
  return (
    <nav className="flex w-[72px] shrink-0 flex-col bg-[linear-gradient(#481f23,#33182c_35%,#281629_65%,#20151c)] pt-0.5" aria-label="Dock">
      {dock.map((d) => (
        <button key={d.name} aria-label={d.name} className="relative flex h-[68px] w-full shrink-0 items-center justify-center">
          <span className={d.active ? "flex size-16 items-center justify-center rounded bg-white/20" : "flex size-16 items-center justify-center"}>
            <svg viewBox="0 0 48 48" className="size-12">{d.art}</svg>
          </span>
          {d.running && <span className="absolute left-1 size-1.5 rounded-full bg-[#e95420]" />}
        </button>
      ))}
      <button aria-label="Show applications" className="mx-auto mb-[18px] mt-auto grid grid-cols-3 gap-1.5">
        {Array.from({ length: 9 }, (_, i) => <span key={i} className="size-1.5 rounded-[1px] bg-[#eee]" />)}
      </button>
    </nav>
  );
}

/* ---------- Browser ---------- */

const favicons: Record<string, React.ReactNode> = {
  g: <span className="flex size-4 shrink-0 items-center justify-center rounded-full bg-white"><FcGoogle className="size-3.5" /></span>,
  tree: (
    <svg viewBox="0 0 16 16" className="size-4 shrink-0" fill="none" stroke="#aaa">
      <path d="M4 5L1 8l3 3M12 5l3 3-3 3" /><circle cx="8" cy="3" r="1.500" /><circle cx="8" cy="8" r="1.500" /><circle cx="8" cy="13" r="1.500" /><path d="M6 5l4 6M10 5l-4 6" />
    </svg>
  ),
  pen: <span className="flex size-4 shrink-0 items-center justify-center bg-white text-black"><SiCodepen className="size-3.5" /></span>,
  dark: (
    <svg viewBox="0 0 16 16" className="size-4 shrink-0"><rect width="16" height="16" fill="#000" /><path d="M3 7q0-4 5-4 6 0 6 3 0 2-3 3l-1 1 1 3H8l-1-3Q3 11 3 7z" fill="#fff" /></svg>
  ),
  js: <svg viewBox="0 0 16 16" className="size-4 shrink-0"><circle cx="8" cy="8" r="8" fill="#f7df4e" /><text x="8" y="11" fontSize="7" fontWeight="800" textAnchor="middle" fill="#333" fontFamily="'Open Sans', sans-serif">JS</text></svg>,
  w: (
    <svg viewBox="0 0 16 16" className="size-4 shrink-0" fill="none" stroke="#0a9b6a">
      <path d="M1 4.500l3 7 2.500-6 2 6 3-7" strokeWidth="2.500" /><path d="M13 2h2l-1 1.500q2 1 0 2.500h-1" />
    </svg>
  ),
  so: <SiStackoverflow className="size-4 shrink-0 text-[#e8642a]" />,
  dev: <svg viewBox="0 0 16 16" className="size-4 shrink-0"><rect width="16" height="16" fill="#000" /><text x="8" y="11" fontSize="7" fontWeight="700" textAnchor="middle" fill="#fff" fontFamily="'Roboto', sans-serif">DEV</text></svg>,
};

const tabs: [string, string][] = [
  ["g", "javasc"], ["tree", "JavaS"], ["pen", "Selec"], ["g", "javasc"], ["dark", "Eleme"], ["dark", "Node."],
  ["js", "JavaS"], ["w", "HTML"], ["w", "Tryit E"], ["w", "HTML"], ["w", "Tryit E"], ["w", "HTML"],
  ["g", "javasc"], ["so", "javasc"], ["w", "HTML"], ["g", "javasc"], ["dev", "JavaS"], ["so", "JavaS"],
  ["dark", "JavaS"], ["w", "JavaS"],
];

const fade = "min-w-0 flex-1 overflow-hidden whitespace-nowrap text-left [mask-image:linear-gradient(90deg,#000_45%,transparent)]";

function TabBar() {
  return (
    <div className="flex h-[33px] shrink-0 bg-[#333132] text-[15px] text-[#f0f0f0]">
      <div className="flex min-w-0 flex-1" role="tablist">
        {tabs.map(([icon, title], i) => (
          <button key={i} role="tab" aria-label={title} className="flex min-w-0 flex-1 items-center gap-1.5 border-r border-[#6a6869] px-[9px]">
            {favicons[icon]}
            <span className={fade}>{title}</span>
          </button>
        ))}
        <div role="tab" aria-selected="true" className="flex min-w-0 flex-1 items-center gap-1.5 border-t-2 border-[#e95420] bg-[#f9f9fa] px-[9px] text-[#555]">
          <svg viewBox="0 0 16 16" className="size-4 shrink-0">
            <rect width="16" height="16" fill="#000" />
            <g fontSize="9" fontWeight="900" fontFamily="'Roboto', sans-serif"><text x="0" y="12" fill="#fff">M</text><text x="9" y="12" fill="#b99a2c">D</text></g>
          </svg>
          <span className={fade}>Ma</span>
          <button aria-label="Close tab" className="pr-0.5"><svg viewBox="0 0 10 10" className="size-2.5"><path d="M.5.5l9 9M9.500.5l-9 9" stroke="#444" strokeWidth="1.500" /></svg></button>
        </div>
      </div>
      <div className="flex w-[173px] shrink-0 items-center px-[9px]">
        <button aria-label="New tab"><svg viewBox="0 0 16 16" className="size-4"><path d="M8 1v14M1 8h14" stroke="#ddd" strokeWidth="2" /></svg></button>
        <div className="ml-auto flex items-center gap-[18px]">
          <button aria-label="Minimize"><svg className="size-4" viewBox="0 0 16 16"><path d="M4 11h8" stroke="#fff" strokeWidth="1.200" /></svg></button>
          <button aria-label="Restore"><svg className="size-4" viewBox="0 0 16 16" fill="none" stroke="#fff"><rect x="4.500" y="6.500" width="5" height="5" /><path d="M7 4.500h4.500V10" opacity=".6" /></svg></button>
          <button aria-label="Close window" className="flex size-[18px] items-center justify-center rounded-full bg-[#e95420]">
            <svg className="size-2.5" viewBox="0 0 10 10"><path d="M1.500 1.500l7 7M8.500 1.500l-7 7" stroke="#fff" strokeWidth="1.300" /></svg>
          </button>
        </div>
      </div>
    </div>
  );
}

function NavBtn({ label, children, pale = false }: { label: string; children: React.ReactNode; pale?: boolean }) {
  return (
    <button aria-label={label} className={pale ? "text-[#bbb]" : "text-[#4c4c4c]"}>
      <svg viewBox="0 0 16 16" className="size-4" fill="none" stroke="currentColor" strokeWidth="1.700">{children}</svg>
    </button>
  );
}

function AddressBar() {
  return (
    <div className="flex h-[41px] shrink-0 items-center border-b border-[#bebebe] bg-[#f9f9fa] pl-[3px]">
      <div className="flex w-[247px] items-center gap-4">
        <span className="flex size-[34px] items-center justify-center rounded-full border border-[#b5b5b5] bg-white">
          <NavBtn label="Back"><path d="M15.500 8H1M7.500 1.500L1 8l6.500 6.500" /></NavBtn>
        </span>
        <span className="-ml-2 flex gap-4">
          <NavBtn label="Forward" pale><path d="M.5 8H15M8.500 1.500L15 8l-6.500 6.500" /></NavBtn>
          <NavBtn label="Reload"><path d="M14 9.500A6 6 0 1 1 12.500 4" /><path d="M9 6.500h6V.5z" fill="currentColor" stroke="none" /></NavBtn>
          <NavBtn label="Home"><path d="M.8 8.500L8 1.500l7.200 7M3 7v8h10V7" /><path d="M7 15v-5h2v5" /></NavBtn>
        </span>
      </div>
      <div className="flex h-[30px] min-w-0 flex-1 items-center rounded border border-[#bcbcbc] bg-white pl-2 pr-1.5 shadow-[0_1px_3px_#0002]">
        <NavBtn label="Tracking protection"><path d="M8 1.500q3 1.500 5.500 1.500 0 8-5.500 11.500Q2.500 11 2.500 3 5 3 8 1.500z" /><path d="M8 5v6" strokeWidth="2.500" /></NavBtn>
        <span className="mx-[5px] h-[22px] w-px bg-[#c8c8c8]" />
        <span className="flex items-center gap-1.5">
          <NavBtn label="Page information"><path d="M3.500 1h6L14 5v10H2V2.500Q2 1 3.500 1zM9.500 1v4H14" /></NavBtn>
          <NavBtn label="Passwords"><circle cx="12" cy="8" r="3" /><path d="M9 8H0M3 8v3M6 8v2" /></NavBtn>
        </span>
        <p className="ml-2 flex-1 text-[15px]"><span className="text-black">127.0.0.1</span><span className="text-[#808080]">:8000/isemri</span></p>
        <span className="flex gap-3">
          <NavBtn label="Page actions"><path d="M1 8h3M6.500 8h3M12 8h3" strokeWidth="3" /></NavBtn>
          <NavBtn label="Save to Pocket"><path d="M1 2h14v5q0 7-7 7T1 7z" /><path d="M4.500 6L8 9.500 11.500 6" /></NavBtn>
          <NavBtn label="Bookmark"><path d="M8 1.200l2 4.800 5 .4-4 3.400L12.300 15 8 12.200 3.700 15 5 9.800 1 6.400 6 6z" /></NavBtn>
        </span>
      </div>
      <div className="flex w-[258px] items-center justify-end gap-4 pr-[11px]">
        <NavBtn label="Library"><path d="M2 1v14M5.500 1v14M9 1v14M11 1.500L15 15" /></NavBtn>
        <NavBtn label="Sidebars"><rect x="1" y="1.500" width="14" height="13" rx="2" /><path d="M8 2v12M3 5h3M3 8h3" /></NavBtn>
        <span className="relative flex">
          <NavBtn label="Account"><circle cx="8" cy="8" r="6.800" strokeWidth="1.200" /><circle cx="8" cy="6" r="2.500" fill="currentColor" /><path d="M3.500 12q4.500-5 9 0-4.500 4-9 0z" fill="currentColor" stroke="none" /></NavBtn>
          <span className="absolute -right-0.5 -top-0.5 size-1.5 rounded-full bg-[#00b3f4]" />
        </span>
        <span className="-mx-1 h-8 w-px bg-[#ccc]" />
        <NavBtn label="Menu"><path d="M2 3h12M2 8h12M2 13h12" strokeWidth="2" /></NavBtn>
      </div>
    </div>
  );
}

/* ---------- Work order page ---------- */

function Field({ label, kind = "text", value = "" }: { label: string; kind?: string; value?: string }) {
  const id = label.replace(/\W+/g, "-") + label.length;
  return (
    <div>
      <label htmlFor={id} className="mb-1.5 block text-[13px] leading-6">{label}</label>
      {kind === "select" ? (
        <div className="relative">
          <select id={id} className="block h-[33px] w-full appearance-none border border-[#5f6163] bg-white px-4 text-[14px] outline-none">
            <option>{value}</option>
          </select>
          <span className="pointer-events-none absolute inset-y-px right-px flex w-2 items-center justify-center border-b-2 border-l border-r border-b-[#999] border-l-[#ddd] border-r-[#999] bg-[#f2f2f2]">
            <svg viewBox="0 0 6 4" className="h-1 w-1.5"><path d="M0 0h6L3 4z" /></svg>
          </span>
        </div>
      ) : (
        <input id={id} type="text" placeholder={kind === "date" ? "mm / dd / yyyy" : undefined} className="block h-[35px] w-full border border-[#5f6163] bg-white px-4 text-[14px] outline-none placeholder:text-[#777]" />
      )}
    </div>
  );
}

const menu = [
  {
    label: "Dasboard",
    icon: <svg viewBox="0 0 16 12" className="h-3 w-4" fill="none" stroke="currentColor"><path d="M.5 0v11.500H16" /><path d="M4 10V7M7 10V4M10 10V5.500M13 10V2" strokeWidth="2" /></svg>,
  },
  { label: "İş Emri", icon: <FaThLarge className="size-3" /> },
  { label: "Arama", icon: <FaSearch className="size-3" /> },
  { label: "Yazdır", icon: <FaRegFilePdf className="size-3" /> },
];

function Card({ title, children }: { title: string; children?: React.ReactNode }) {
  return (
    <section className="overflow-hidden rounded-[3px] border border-[#dcdcdc] bg-white">
      <h2 className="flex h-[55px] items-center bg-[#2f4050] px-5 text-[20px] text-[#c4ab38]">{title}</h2>
      {children}
    </section>
  );
}

function WorkOrders() {
  const [active, setActive] = useState(1);
  return (
    <div className="flex min-h-0 flex-1 overflow-hidden bg-[#f2f2f2] font-['Open_Sans',sans-serif] text-[13px] text-[#676a6c]">
      <aside className="w-[220px] shrink-0 bg-[#2f4050] text-[#a7b1c2]">
        <div className="relative flex h-[86px] items-center justify-center bg-[#273c49]">
          <svg viewBox="0 0 220 86" preserveAspectRatio="none" className="absolute inset-0 size-full" aria-hidden="true">
            <path d="M0 15l100 13L60 86H0z" fill="#2a4350" opacity=".6" />
            <path d="M118 0l-18 28 70-10L220 0z" fill="#2b4552" opacity=".6" />
            <path d="M100 28l50 58h70V30z" fill="#24394a" opacity=".5" />
          </svg>
          <p className="relative font-['Roboto',sans-serif] text-[21px] font-black text-black">MASTER<span className="text-[#c2a636]">DEFENCE</span></p>
        </div>
        <nav>
          {menu.map((m, i) => (
            <a
              key={m.label}
              href="#"
              onClick={() => setActive(i)}
              className={
                i === active
                  ? "flex h-[47px] items-center gap-2.5 border-l-4 border-[#19aa8d] bg-[#293846] pl-[25px] font-semibold text-white"
                  : "flex h-12 items-center gap-2 pl-[25px] font-semibold"
              }
            >
              {m.icon}
              {m.label}
            </a>
          ))}
        </nav>
      </aside>
      <main className="min-w-0 flex-1">
        <header className="flex h-[62px] items-center border-b border-[#e4e4e4] bg-white pl-[5px] pr-2.5 text-[#999c9e]">
          <button aria-label="Toggle menu" className="flex h-[30px] w-[37px] items-center justify-center rounded-[3px] bg-[#1ab394] text-white"><FaBars className="size-3" /></button>
          <span className="ml-auto text-[13px] text-[#676a6c]">Planlama - Yönetici</span>
          <a href="#" className="ml-5 flex items-center gap-1">
            <svg viewBox="0 0 18 18" className="size-[18px] text-[#5a5d5f]" fill="currentColor"><circle cx="9" cy="9" r="8" fill="none" stroke="currentColor" strokeWidth="1.500" /><ellipse cx="9" cy="6.500" rx="3.500" ry="4" /><path d="M3 13.500q2-3 6-3t6 3q-6 6-12 0z" /></svg>
            Ergün Bilsel
          </a>
          <button aria-label="Notifications" className="ml-5"><FaBell className="size-3.5" /></button>
          <a href="#" className="ml-[25px] flex items-center gap-2.5 text-[14px] font-semibold">
            <svg viewBox="0 0 14 12" className="h-3 w-3.5" fill="none" stroke="currentColor"><path d="M6 1H2.500Q1 1 1 2.500v7Q1 11 2.500 11H6" strokeWidth="1.300" /><path d="M5 4.500h3.500V1.500L13.500 6l-5 4.500v-3H5z" fill="currentColor" stroke="none" /></svg>
            Sistem Çıkış
          </a>
        </header>
        <div className="flex flex-col gap-6 px-2.5 pt-[50px]">
          <Card title="İş emri oluşturma">
            <form className="flex flex-col gap-3.5 px-5 pb-5 pt-[18px]" onSubmit={(e) => e.preventDefault()}>
              <div className="grid grid-cols-3 gap-x-2.5 gap-y-3.5">
                <div className="col-start-1"><Field label="İş Emri No*" /></div>
                <Field label="Tüp Sayısı*" />
                <div className="col-start-1"><Field label="Ürün Kodu*" /></div>
                <Field label="Müşteri Siparis No*" />
              </div>
              <div className="grid grid-cols-2 gap-x-2.5 gap-y-3.5">
                <Field label="Başlangıç*" kind="date" />
                <Field label="Bitiş*" kind="date" />
                <Field label="FM200 Miktarı (gram)*" />
                <Field label="Sodyum Bikarbonat Miktarı (gram)*" />
                <Field label="Tüp Gövde Türü" kind="select" value="3.4 LT Aluminyum" />
                <Field label="Valf Türü*" kind="select" value="Aluminyum" />
                <Field label="Renk*" kind="select" value="Kırmızı Ral3000" />
                <Field label="Emniyet Ventil Türü*" kind="select" value="Rapture Disk" />
                <Field label="Bölüm*" kind="select" value="Motor" />
                <Field label="Müşteri*" />
                <Field label="Ağırlık alt limit*" />
                <Field label="Ağırlık üst limit*" />
              </div>
              <button type="submit" className="h-[35px] w-[68px] rounded-[3px] bg-[#1c84c6] text-[13px] text-white">Kaydet</button>
            </form>
          </Card>
          <Card title="İş emri öncelik tablosu"><div className="h-40" /></Card>
        </div>
      </main>
      <div className="flex w-3 shrink-0 flex-col items-center bg-[#f6f6f6] pt-[3px]">
        <span className="h-[41%] w-1.5 rounded-full bg-[#666]" />
      </div>
    </div>
  );
}

export default function App() {
  return (
    <div className="flex h-screen min-h-[720px] overflow-hidden">
      <Writer />
      <div className={`flex w-1/2 min-w-0 flex-col ${ui}`}>
        <header className="grid h-[27px] shrink-0 grid-cols-[1fr_auto_1fr] items-center bg-[#1d1d1d] text-[15px] text-[#f2f2f2]">
          <div className="flex items-center pl-3">
            <button>Activities</button>
            <button className="ml-[34px] flex items-center gap-1.5">
              <FaFirefoxBrowser className="size-4" />
              Firefox Web Browser
              <svg viewBox="0 0 10 6" className="h-1.5 w-2.5"><path d="M0 0h10L5 6z" fill="currentColor" /></svg>
            </button>
          </div>
          <button className="whitespace-pre pl-[74px]">May 29  17:39</button>
          <div className="flex items-center justify-end gap-3 pr-[15px]">
            <svg viewBox="0 0 16 14" className="h-3.5 w-4" fill="none" stroke="currentColor"><path d="M1 4q7-5.500 14 0" strokeWidth="1.500" /><path d="M2.500 6q5.500-4 11 0L8 13z" fill="currentColor" stroke="none" /></svg>
            <svg viewBox="0 0 16 14" className="h-3.5 w-4" fill="none" stroke="currentColor"><path d="M1 5h2l4-4v12L3 9H1z" fill="currentColor" /><path d="M9.500 4.500q2 2.500 0 5" /><path d="M12 3q3 4 0 8" opacity=".5" /></svg>
            <svg viewBox="0 0 16 16" className="size-4" fill="none" stroke="currentColor"><path d="M3 4L1 9h3l-2 5" opacity=".6" /><rect x="6.500" y="2.500" width="7" height="13" rx="1" strokeWidth="1.300" /><path d="M8 5h4v8.500H8zM8.500 1h3v1h-3z" fill="currentColor" stroke="none" /></svg>
            <svg viewBox="0 0 10 6" className="h-1.5 w-2.5"><path d="M0 0h10L5 6z" fill="currentColor" /></svg>
          </div>
        </header>
        <div className="flex min-h-0 flex-1">
          <Dock />
          <section className="flex min-w-0 flex-1 flex-col">
            <TabBar />
            <AddressBar />
            <WorkOrders />
          </section>
        </div>
      </div>
    </div>
  );
}
